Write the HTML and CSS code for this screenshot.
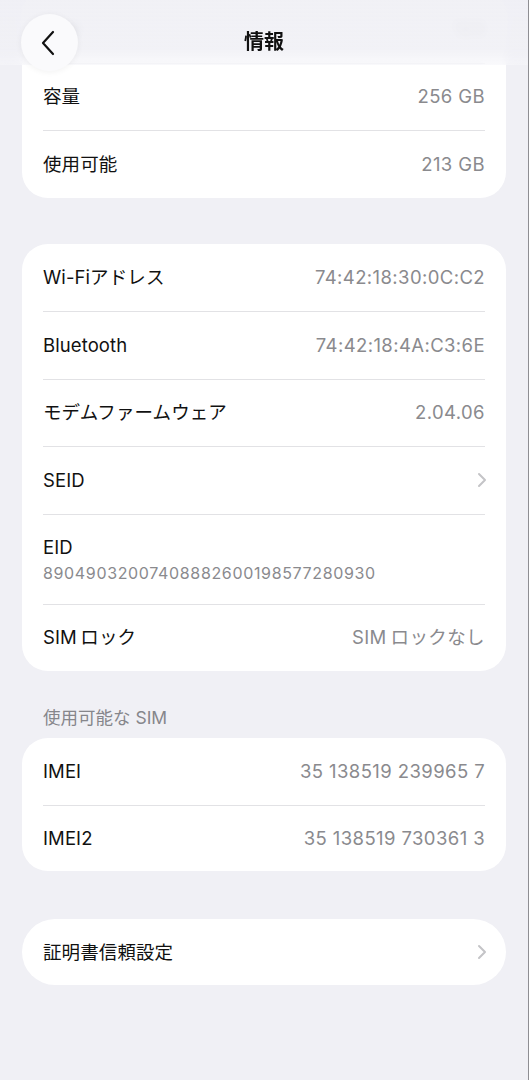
FILE: index.html
```html
<!DOCTYPE html>
<html lang="ja">
<head>
<meta charset="utf-8">
<title>情報</title>
<link rel="stylesheet" href="styles.css">
</head>
<body>
<div class="header">
  <button class="back" aria-label="戻る">
    <svg width="16" height="26" viewBox="0 0 16 26"><path d="M13 2 L3 13 L13 24" fill="none" stroke="#111" stroke-width="2.2" stroke-linecap="round" stroke-linejoin="round"/></svg>
  </button>
  <div class="title">情報</div>
</div>
<main class="page">
  <section class="card card-first">
    <div class="row"><div class="row-inner"><span class="label">App</span><span class="value">123</span></div></div>
    <div class="row"><div class="row-inner"><span class="label">容量</span><span class="value">256 GB</span></div></div>
    <div class="row"><div class="row-inner"><span class="label">使用可能</span><span class="value">213 GB</span></div></div>
  </section>

  <section class="card">
    <div class="row"><div class="row-inner"><span class="label">Wi-Fiアドレス</span><span class="value">74:42:18:30:0C:C2</span></div></div>
    <div class="row"><div class="row-inner"><span class="label">Bluetooth</span><span class="value">74:42:18:4A:C3:6E</span></div></div>
    <div class="row"><div class="row-inner"><span class="label">モデムファームウェア</span><span class="value">2.04.06</span></div></div>
    <div class="row"><div class="row-inner"><span class="label">SEID</span><svg class="chev" width="10" height="16" viewBox="0 0 10 16"><path d="M2 2 L8 8 L2 14" fill="none" stroke="#c4c4c7" stroke-width="2" stroke-linecap="round" stroke-linejoin="round"/></svg></div></div>
    <div class="row"><div class="row-inner tall"><span class="label">EID</span><span class="sub">89049032007408882600198577280930</span></div></div>
    <div class="row"><div class="row-inner"><span class="label">SIM&#8201;ロック</span><span class="value">SIM&#8201;ロックなし</span></div></div>
  </section>

  <h2 class="section-title">使用可能な SIM</h2>
  <section class="card card-sim">
    <div class="row"><div class="row-inner"><span class="label">IMEI</span><span class="value">35 138519 239965 7</span></div></div>
    <div class="row"><div class="row-inner"><span class="label">IMEI2</span><span class="value">35 138519 730361 3</span></div></div>
  </section>

  <section class="card card-pill">
    <div class="row"><div class="row-inner"><span class="label">証明書信頼設定</span><svg class="chev" width="10" height="16" viewBox="0 0 10 16"><path d="M2 2 L8 8 L2 14" fill="none" stroke="#c4c4c7" stroke-width="2" stroke-linecap="round" stroke-linejoin="round"/></svg></div></div>
  </section>
</main>
</body>
</html>
```
FILE: styles.css
```css
* { box-sizing: border-box; }
html, body { margin: 0; padding: 0; }
body {
  background: #f0f0f5;
  font-family: Inter, "Noto Sans CJK JP", sans-serif;
  color: #111;
  width: 529px;
  height: 1080px;
  overflow: hidden;
  border-right: 1px solid #8e8e93;
}
.header {
  position: absolute;
  left: 0; top: 0;
  width: 528px;
  height: 65px;
  z-index: 5;
  background: linear-gradient(rgba(240,240,245,0.93), rgba(240,240,245,0.88) 75%, rgba(246,246,250,0.6));
  backdrop-filter: blur(5px);
}
.back {
  position: absolute;
  left: 21px; top: 14px;
  width: 57px; height: 57px;
  border-radius: 50%;
  border: none;
  background: #fafafc;
  box-shadow: 0 1px 6px rgba(0,0,0,0.06);
  display: flex;
  align-items: center;
  justify-content: center;
  padding: 0 4px 0 0;
}
.title {
  position: absolute;
  left: 0; right: 0; top: 29px;
  text-align: center;
  font-size: 20px;
  font-weight: 700;
  line-height: 26px;
}
.page {
  padding: 0 22px;
  display: flex;
  flex-direction: column;
}
.card {
  background: #fff;
  border-radius: 26px;
  margin-top: 46px;
}
.card-first { margin-top: -5px; }
.card-sim { margin-top: 0; }
.card-pill { margin-top: 48px; border-radius: 33px; }
.row { padding: 0 21px; }
.row-inner {
  height: 67.5px;
  display: flex;
  align-items: center;
  justify-content: space-between;
  border-top: 1px solid #e2e2e5;
  padding-bottom: 1px;
}
.row:first-child .row-inner { border-top: none; }
.card-sim .row-inner { height: 66.5px; }
.card-pill .row-inner { height: 66px; }
.row-inner.tall {
  height: 90px;
  flex-direction: column;
  align-items: flex-start;
  justify-content: center;
  gap: 4px;
}
.label { font-size: 18.5px; line-height: 24px; letter-spacing: 0.1px; }
.value { font-size: 18.5px; line-height: 24px; color: #8a8a8e; letter-spacing: 0.4px; }
.sub { font-size: 16px; line-height: 20px; color: #8a8a8e; letter-spacing: 0.65px; }
.chev { margin-right: -2px; }
.section-title {
  margin: 37px 0 10px 21px;
  font-size: 17.5px;
  font-weight: 400;
  line-height: 20px;
  color: #86868b;
}
```
